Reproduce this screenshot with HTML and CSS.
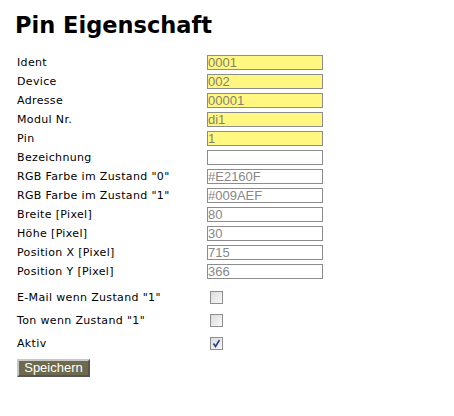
FILE: index.html
```html
<!DOCTYPE html>
<html>
<head>
<meta charset="utf-8">
<link rel="stylesheet" href="styles.css">
</head>
<body>
<div class="page">
  <h1 class="title">Pin Eigenschaft</h1>
  <form class="form">
    <div class="fields">
      <label class="lbl">Ident</label><input class="inp hl" value="0001">
      <label class="lbl">Device</label><input class="inp hl" value="002">
      <label class="lbl">Adresse</label><input class="inp hl" value="00001">
      <label class="lbl">Modul Nr.</label><input class="inp hl" value="di1">
      <label class="lbl">Pin</label><input class="inp hl" value="1">
      <label class="lbl">Bezeichnung</label><input class="inp" value="">
      <label class="lbl">RGB Farbe im Zustand "0"</label><input class="inp" value="#E2160F">
      <label class="lbl">RGB Farbe im Zustand "1"</label><input class="inp" value="#009AEF">
      <label class="lbl">Breite [Pixel]</label><input class="inp" value="80">
      <label class="lbl">Höhe [Pixel]</label><input class="inp" value="30">
      <label class="lbl">Position X [Pixel]</label><input class="inp" value="715">
      <label class="lbl">Position Y [Pixel]</label><input class="inp" value="366">
    </div>
    <div class="checks">
      <label class="lbl">E-Mail wenn Zustand "1"</label><span class="cb"></span>
      <label class="lbl">Ton wenn Zustand "1"</label><span class="cb"></span>
      <label class="lbl">Aktiv</label><span class="cb on"><svg width="11" height="11" viewBox="0 0 11 11"><path d="M2.5 5.5 L4.5 8.5 L8.5 2" fill="none" stroke="#2a3f8f" stroke-width="1.6"/></svg></span>
    </div>
    <button type="button" class="btn">Speichern</button>
  </form>
</div>
</body>
</html>
```
FILE: styles.css
```css
html, body { margin: 0; padding: 0; background: #fff; }
body { font-family: "DejaVu Sans", Verdana, sans-serif; color: #000; }
.page { padding: 11px 0 0 15px; }
.title { font-size: 22.5px; font-weight: bold; margin: 0; line-height: 28px; }
.form { margin: 14px 0 0 2px; }
.fields { display: grid; grid-template-columns: 190px 116px; grid-auto-rows: 19px; align-items: center; }
.lbl { font-size: 11px; line-height: 13px; letter-spacing: 0.35px; }
.inp {
  box-sizing: border-box; width: 116px; height: 15px; margin: 0; padding: 0;
  border: 1px solid #8c8c8c; background: #fff;
  font-family: "Liberation Sans", Arial, sans-serif; font-size: 13px; line-height: 13px; color: #888;
}
.inp.hl { background: #fff77f; color: #858370; }
.checks { display: grid; grid-template-columns: 193px 13px; grid-auto-rows: 23px; align-items: center; margin-top: 5px; }
.cb {
  box-sizing: border-box; width: 13px; height: 13px; border: 1px solid #8f8f8f;
  background: linear-gradient(135deg, #dcdcdc, #f8f8f8);
  display: flex; align-items: center; justify-content: center;
}
.btn {
  display: block; margin-top: 4px; box-sizing: border-box; width: 73px; height: 18px; padding: 0;
  background: #6e6a4e; color: #fff; font-family: "Liberation Sans", Arial, sans-serif; font-size: 13px; line-height: 14px;
  border: 2px solid; border-color: #c8c8c8 #555 #555 #c8c8c8;
}
```
